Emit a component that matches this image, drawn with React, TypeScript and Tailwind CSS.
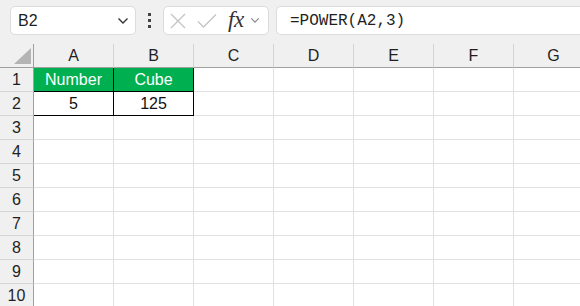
import React from "react";

const cols = ["A", "B", "C", "D", "E", "F", "G"];
const rows = [1, 2, 3, 4, 5, 6, 7, 8, 9, 10];

function Chevron({ className }: { className?: string }) {
  return (
    <svg viewBox="0 0 12 8" className={className} fill="none" stroke="currentColor" strokeWidth="1.4">
      <path d="M1.5 1.5 L6 6 L10.5 1.5" />
    </svg>
  );
}

function cellContent(r: number, c: number) {
  if (r === 1 && c === 0) return { text: "Number", green: true };
  if (r === 1 && c === 1) return { text: "Cube", green: true };
  if (r === 2 && c === 0) return { text: "5", green: false };
  if (r === 2 && c === 1) return { text: "125", green: false };
  return null;
}

export default function App() {
  return (
    <div className="w-[580px] h-[306px] overflow-hidden bg-white font-['Liberation_Sans',Arial,sans-serif] text-[#1f1f1f]">
      {/* Top bar */}
      <div className="h-[44px] bg-[#f0f0f0] flex items-start pt-[6px] pl-[10px]">
        <div className="w-[126px] h-[29px] bg-white border border-[#dcdcdc] rounded-[5px] flex items-center justify-between pl-[7px] pr-[6px]">
          <span className="text-[16px] leading-none">B2</span>
          <Chevron className="w-[12px] h-[8px] text-[#333]" />
        </div>
        <div className="w-[27px] h-[29px] flex flex-col items-center justify-center gap-[3px]">
          <div className="w-[3px] h-[3px] bg-[#444]" />
          <div className="w-[3px] h-[3px] bg-[#444]" />
          <div className="w-[3px] h-[3px] bg-[#444]" />
        </div>
        <div className="w-[106px] h-[29px] bg-white border border-[#dcdcdc] rounded-[5px] flex items-center pl-[6px]">
          <svg viewBox="0 0 16 16" className="w-[16px] h-[16px] text-[#c4c4c4]" fill="none" stroke="currentColor" strokeWidth="1.3">
            <path d="M1 1 L15 15 M15 1 L1 15" />
          </svg>
          <svg viewBox="0 0 20 16" className="w-[20px] h-[16px] ml-[11px] text-[#c4c4c4]" fill="none" stroke="currentColor" strokeWidth="1.3">
            <path d="M1 8.5 L6.5 14 L19 1.5" />
          </svg>
          <span className="ml-[11px] font-['Liberation_Serif',serif] italic text-[23px] leading-none text-[#333] tracking-[-0.5px] -mt-[2px]">fx</span>
          <Chevron className="ml-[6px] w-[10px] h-[7px] text-[#888]" />
        </div>
        <div className="ml-[7px] flex-1 h-[29px] bg-white border border-[#dcdcdc] border-r-0 rounded-l-[5px] flex items-center pl-[13px]">
          <span className="font-['Liberation_Mono',monospace] text-[16px] leading-none text-[#1f1f1f]">=POWER(A2,3)</span>
        </div>
      </div>

      {/* Grid */}
      <div className="grid grid-cols-[34px_repeat(7,80px)]">
        {/* Column header row */}
        <div className="h-[24px] bg-[#f0f0f0] border-r border-b border-[#a0a0a0] relative">
          <svg viewBox="0 0 17 16" className="absolute left-[14px] top-[4px] w-[17px] h-[16px]">
            <path d="M17 0 L17 16 L0 16 Z" fill="#b4b4b4" />
          </svg>
        </div>
        {cols.map((c) => (
          <div
            key={c}
            className="h-[24px] bg-[#f0f0f0] border-r border-[#d4d4d4] border-b-[1px] border-b-[#a0a0a0] flex items-center justify-center text-[16px] leading-none"
          >
            {c}
          </div>
        ))}

        {rows.map((r) => (
          <React.Fragment key={r}>
            <div className="h-[24px] bg-[#f0f0f0] border-r border-r-[#a0a0a0] border-b border-b-[#d4d4d4] flex items-center justify-center text-[16px] leading-none">
              {r}
            </div>
            {cols.map((c, ci) => {
              const content = cellContent(r, ci);
              if (content) {
                return (
                  <div
                    key={c}
                    className={
                      content.green
                        ? "h-[24px] bg-[#00b050] text-white border-r border-b border-black flex items-center justify-center text-[16px] leading-none"
                        : "h-[24px] bg-white text-[#111] border-r border-b border-black flex items-center justify-center text-[16px] leading-none"
                    }
                  >
                    {content.text}
                  </div>
                );
              }
              return <div key={c} className="h-[24px] bg-white border-r border-b border-[#e1e1e1]" />;
            })}
          </React.Fragment>
        ))}
      </div>
    </div>
  );
}
